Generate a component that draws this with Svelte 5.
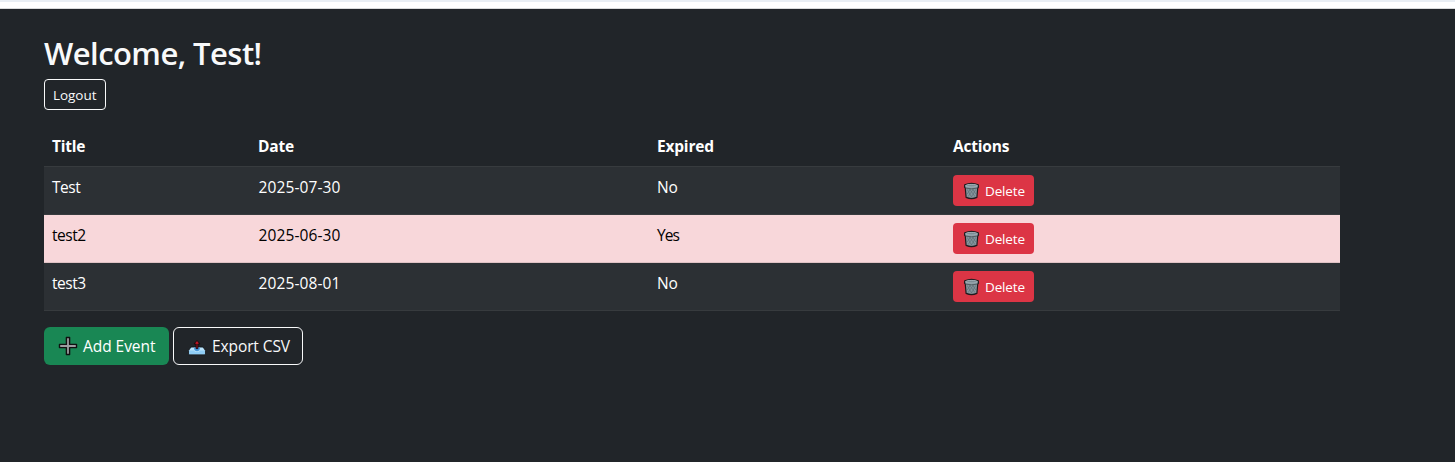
<script>
  const events = [
    { title: 'Test', date: '2025-07-30', expired: false },
    { title: 'test2', date: '2025-06-30', expired: true },
    { title: 'test3', date: '2025-08-01', expired: false }
  ];
</script>

<div class="strip"></div>
<main>
  <h2>Welcome, Test!</h2>
  <button class="btn small outline logout">Logout</button>

  <table>
    <colgroup><col class="c1" /><col class="c2" /><col class="c3" /><col class="c4" /></colgroup>
    <thead>
      <tr><th>Title</th><th>Date</th><th>Expired</th><th>Actions</th></tr>
    </thead>
    <tbody>
      {#each events as event}
        <tr class:expired={event.expired}>
          <td class="title">{event.title}</td>
          <td class="date">{event.date}</td>
          <td class="flag">{event.expired ? 'Yes' : 'No'}</td>
          <td>
            <button class="btn small danger">
              <svg width="17" height="18" viewBox="0 0 17 18" aria-hidden="true">
                <path d="M1.7 2.9 Q8.5 0 15.3 2.9 L15.5 5.2 L14.7 6.2 L13.9 15.4 Q8.5 17.8 3.1 15.4 L2.3 6.2 L1.5 5.2Z" fill="#84949c" stroke="#201b1e" stroke-width="1.2" stroke-linejoin="round" />
                <ellipse cx="8.5" cy="3.7" rx="5.8" ry="1.3" fill="#7c8c94" stroke="#a9b8bf" stroke-width="0.8" />
                <path d="M4.2 7.4 L8.8 15.4 M6.5 7 L12 14.6 M9.5 7 L12.8 12 M12.8 7.4 L8.2 15.4 M10.5 7 L5 14.6 M7.5 7 L4.2 12" stroke="#5b6a71" stroke-width="0.6" fill="none" />
                <path d="M2.6 6.1 Q8.5 7.5 14.4 6.1" stroke="#3c4549" stroke-width="0.7" fill="none" />
              </svg>
              <span>Delete</span>
            </button>
          </td>
        </tr>
      {/each}
    </tbody>
  </table>

  <div class="actions">
    <button class="btn success">
      <svg width="20" height="20" viewBox="0 0 20 20" aria-hidden="true">
        <path d="M8.4 1.5h3.2v6.9h6.9v3.2h-6.9v6.9H8.4v-6.9H1.5V8.4h6.9z" fill="#9b9da0" stroke="#111" stroke-width="1.4" stroke-linejoin="round" />
      </svg>
      <span>Add Event</span>
    </button>
    <button class="btn outline export">
      <svg width="20" height="20" viewBox="0 0 20 20" aria-hidden="true">
        <path d="M4 11h12l2.3 3.2v4.5H1.7v-4.5z" fill="#b9e3fb" stroke="#101418" stroke-width="0.9" stroke-linejoin="round" />
        <path d="M2.2 14.4h4.9q.5 1.6 2.9 1.6t2.9-1.6h4.9v3.8H2.2z" fill="#8fcdf6" />
        <path d="M6.8 11.6h6.4l-.7 2.4q-2.5 2.4-5 0z" fill="#4697dc" />
        <path d="M10 4.4L7 8h2.1v4.6h1.8V8H13z" fill="#b91525" stroke="#16090c" stroke-width="0.9" stroke-linejoin="round" />
      </svg>
      <span>Export CSV</span>
    </button>
  </div>
</main>

<style>
  :global(body) {
    background: #212529;
    color: #fff;
    font: 15.5px/24px "Open Sans", "Noto Sans", sans-serif;
  }
  .strip {
    box-sizing: border-box;
    height: 9px;
    background: #fff;
    border-top: 2px solid #e9eef4;
    border-bottom: 1px solid #d9dadb;
  }
  main {
    width: 1296px;
    padding: 24px 0 0 44px;
  }
  h2 {
    margin: 0 0 8px;
    height: 38px;
    font-size: 31px;
    line-height: 41px;
    font-weight: 600;
    letter-spacing: -0.55px;
    color: #f8f9fa;
  }
  .btn {
    box-sizing: border-box;
    display: flex;
    align-items: center;
    height: 38px;
    padding: 0 12px;
    border: 1px solid transparent;
    border-radius: 6px;
    background: none;
    color: #fff;
    font: inherit;
    white-space: nowrap;
  }
  .btn svg {
    flex: none;
  }
  .small {
    height: 31px;
    padding: 0 8px;
    border-radius: 4px;
    font-size: 13.5px;
    line-height: 21px;
  }
  .outline {
    border-color: #f8f9fa;
    color: #f8f9fa;
  }
  .logout {
    width: 62px;
    padding-top: 2px;
    letter-spacing: -0.05px;
  }
  .danger {
    width: 81px;
    gap: 5px;
    padding-left: 9px;
    background: #dc3545;
    letter-spacing: -0.15px;
  }
  .danger span {
    padding-top: 2px;
  }
  .success {
    width: 125px;
    gap: 5px;
    padding-left: 13px;
    background: #198754;
    letter-spacing: -0.05px;
  }
  .export {
    width: 130px;
    gap: 5px;
    padding-left: 13px;
    letter-spacing: -0.1px;
  }
  table {
    width: 1296px;
    margin: 16px 0;
    border-collapse: separate;
    border-spacing: 0;
    table-layout: fixed;
  }
  .c1 { width: 206px; }
  .c2 { width: 399px; }
  .c3 { width: 296px; }
  .c4 { width: 395px; }
  th,
  td {
    padding: 8px;
    border-bottom: 1px solid #373b3e;
    text-align: left;
    vertical-align: top;
  }
  th {
    font-weight: 700;
    letter-spacing: -0.2px;
  }
  td {
    background: #2c3034;
  }
  .title {
    letter-spacing: -0.45px;
  }
  .date {
    padding-left: 8.5px;
    letter-spacing: 0.12px;
  }
  .flag {
    letter-spacing: -0.1px;
  }
  .expired .flag {
    letter-spacing: -0.9px;
  }
  .expired td {
    background: #f8d7da;
    border-color: #dfc2c4;
    color: #000;
  }
  .actions {
    display: flex;
    gap: 4px;
  }
</style>
